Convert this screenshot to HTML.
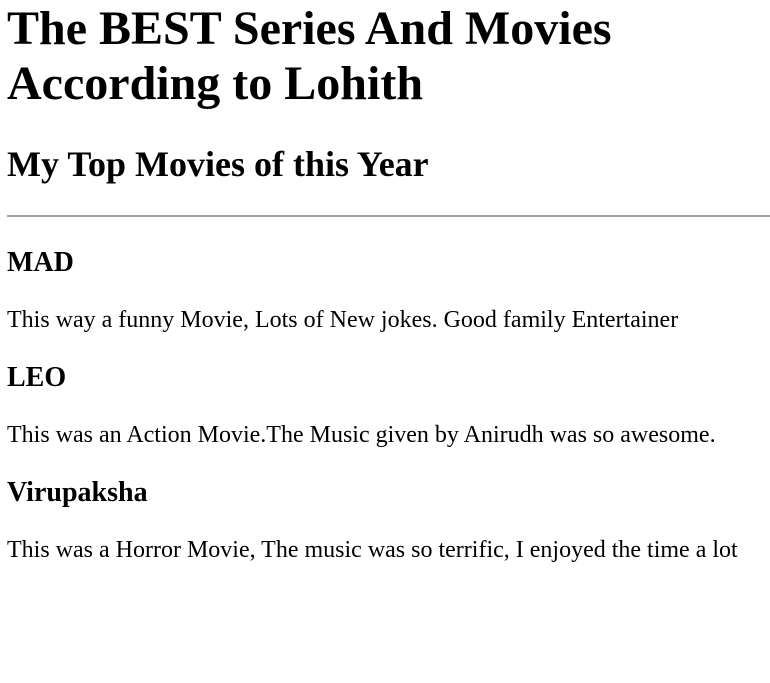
<!DOCTYPE html>
<html><head><style>
html,body{margin:0;padding:0;background:#fff}
body{font-family:"Liberation Serif",serif;font-size:24px;color:#000;padding:0 0 0 7px;width:763px;overflow:hidden}
h1{font-size:48px;margin:0 0 33px;line-height:55px;padding-top:1px}
h2{font-size:36px;margin:0 0 30px;line-height:41px}
hr{border:0;border-top:2px solid #a0a0a0;margin:0 0 30px;width:763px}
h3{font-size:28px;margin:28px 0;line-height:32px}
p{margin:24px 0;line-height:27px}
</style></head><body>
<h1>The BEST Series And Movies According to Lohith</h1>
<h2>My Top Movies of this Year</h2>
<hr>
<h3>MAD</h3>
<p>This way a funny Movie, Lots of New jokes. Good family Entertainer</p>
<h3>LEO</h3>
<p>This was an Action Movie.The Music given by Anirudh was so awesome.</p>
<h3>Virupaksha</h3>
<p>This was a Horror Movie, The music was so terrific, I enjoyed the time a lot</p>
</body></html>
